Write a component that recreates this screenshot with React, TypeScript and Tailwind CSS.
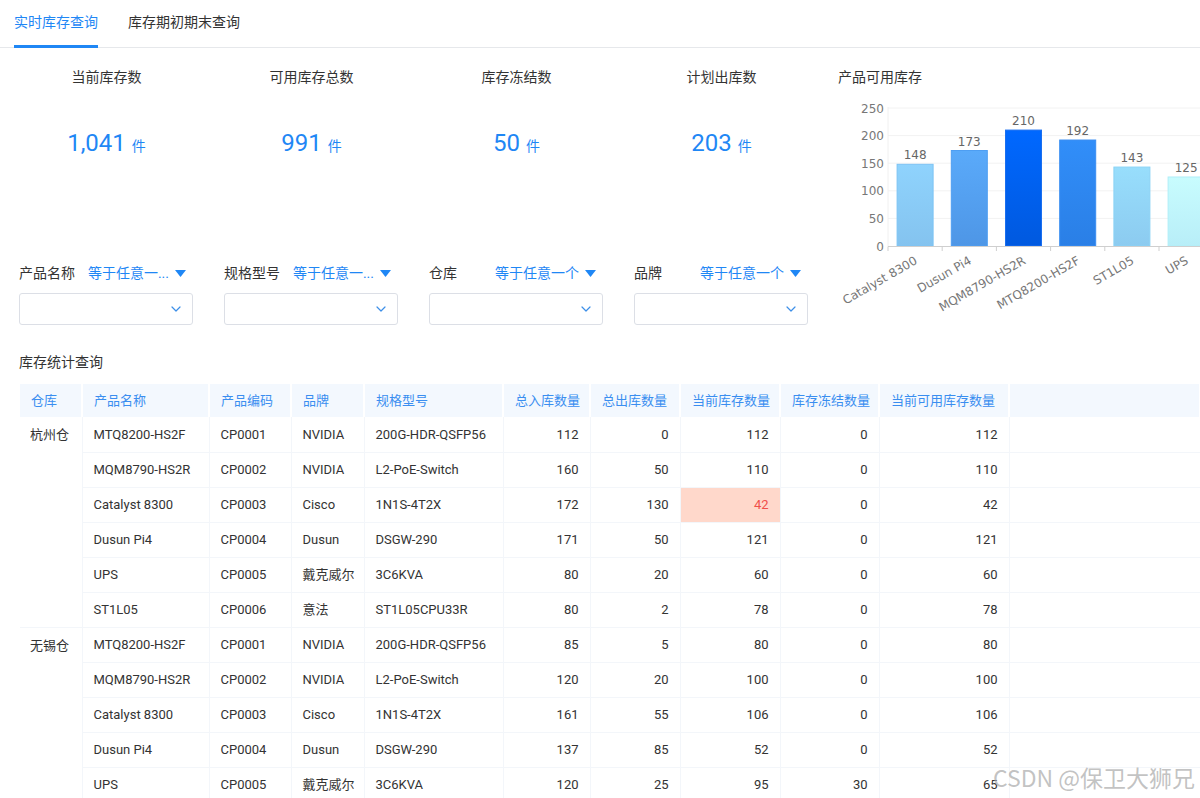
import { ChevronDown } from "lucide-react";

const font = { fontFamily: 'Roboto, "Noto Sans CJK SC", sans-serif' };

const stats = [
  { label: "当前库存数", value: "1,041" },
  { label: "可用库存总数", value: "991" },
  { label: "库存冻结数", value: "50" },
  { label: "计划出库数", value: "203" },
];

const filters = [
  { label: "产品名称", op: "等于任意一..." },
  { label: "规格型号", op: "等于任意一..." },
  { label: "仓库", op: "等于任意一个" },
  { label: "品牌", op: "等于任意一个" },
];

const bars = [
  { name: "Catalyst 8300", v: 148, top: "#8fd3fd", bottom: "#84c3ef", stroke: "#7cc3f4" },
  { name: "Dusun Pi4", v: 173, top: "#5aaafa", bottom: "#4e96e6", stroke: "#4e9ef2" },
  { name: "MQM8790-HS2R", v: 210, top: "#0068ff", bottom: "#0059df", stroke: "#1a6ff0" },
  { name: "MTQ8200-HS2F", v: 192, top: "#318ef9", bottom: "#2a7fe6", stroke: "#3a8ef2" },
  { name: "ST1L05", v: 143, top: "#98defc", bottom: "#8ccbf0", stroke: "#8ad3f6" },
  { name: "UPS", v: 125, top: "#c8fcfe", bottom: "#b8eef8", stroke: "#b0eef8" },
];

type Row = [string, string, string, string, number, number, number, number, number];

const hz: Row[] = [
  ["MTQ8200-HS2F", "CP0001", "NVIDIA", "200G-HDR-QSFP56", 112, 0, 112, 0, 112],
  ["MQM8790-HS2R", "CP0002", "NVIDIA", "L2-PoE-Switch", 160, 50, 110, 0, 110],
  ["Catalyst 8300", "CP0003", "Cisco", "1N1S-4T2X", 172, 130, 42, 0, 42],
  ["Dusun Pi4", "CP0004", "Dusun", "DSGW-290", 171, 50, 121, 0, 121],
  ["UPS", "CP0005", "戴克威尔", "3C6KVA", 80, 20, 60, 0, 60],
  ["ST1L05", "CP0006", "意法", "ST1L05CPU33R", 80, 2, 78, 0, 78],
];

const wx: Row[] = [
  ["MTQ8200-HS2F", "CP0001", "NVIDIA", "200G-HDR-QSFP56", 85, 5, 80, 0, 80],
  ["MQM8790-HS2R", "CP0002", "NVIDIA", "L2-PoE-Switch", 120, 20, 100, 0, 100],
  ["Catalyst 8300", "CP0003", "Cisco", "1N1S-4T2X", 161, 55, 106, 0, 106],
  ["Dusun Pi4", "CP0004", "Dusun", "DSGW-290", 137, 85, 52, 0, 52],
  ["UPS", "CP0005", "戴克威尔", "3C6KVA", 120, 25, 95, 30, 65],
];

const headers = ["仓库", "产品名称", "产品编码", "品牌", "规格型号", "总入库数量", "总出库数量", "当前库存数量", "库存冻结数量", "当前可用库存数量", ""];
const widths = [62, 127, 82, 73, 139, 87, 90, 100, 99, 130, 191];

function Chart() {
  const y = (v: number) => 151 - v * 0.552;
  const ticks = [0, 50, 100, 150, 200, 250];
  const cw = 54.2;
  return (
    <svg width="370" height="225" viewBox="0 0 370 225" style={{ fontFamily: '"DejaVu Sans", Verdana, sans-serif' }}>
      <defs>
        {bars.map((b, i) => (
          <linearGradient key={i} id={`g${i}`} x1="0" y1="0" x2="0" y2="1">
            <stop offset="0" stopColor={b.top} />
            <stop offset="1" stopColor={b.bottom} />
          </linearGradient>
        ))}
      </defs>
      {ticks.map((t) => (
        <g key={t}>
          {t > 0 && <line x1="58" x2="370" y1={y(t)} y2={y(t)} stroke="#f2f2f2" />}
          <text x="54" y={y(t) + 4.5} textAnchor="end" fontSize="12" fill="#777">
            {t}
          </text>
        </g>
      ))}
      <line x1="58" x2="58" y1="12" y2="151" stroke="#f0f0f0" />
      {bars.map((b, i) => {
        const cx = 58 + cw * (i + 0.5);
        return (
          <g key={b.name}>
            <rect x={cx - 18} y={y(b.v)} width="36" height={151 - y(b.v)} fill={`url(#g${i})`} stroke={b.stroke} strokeWidth="1" />
            <text x={cx} y={y(b.v) - 5} textAnchor="middle" fontSize="12" fill="#666">
              {b.v}
            </text>
            <text x={cx + 3} y="168" textAnchor="end" fontSize="12" fill="#777" transform={`rotate(-30 ${cx + 3} 168)`}>
              {b.name}
            </text>
          </g>
        );
      })}
      <line x1="58" x2="370" y1="151.5" y2="151.5" stroke="#cfcfcf" />
      {bars.map((_, i) => (
        <line key={i} x1={58 + cw * i} x2={58 + cw * i} y1="151.5" y2="156" stroke="#cfcfcf" />
      ))}
    </svg>
  );
}

function Rows({ wh, rows }: { wh: string; rows: Row[] }) {
  return (
    <>
      {rows.map((r, i) => (
        <tr key={i} className="h-[35px]">
          {i === 0 && (
            <td rowSpan={rows.length} className="align-top pl-[10px] pt-[8px] border-r border-b border-[#f3f6fa]">
              {wh}
            </td>
          )}
          {r.slice(0, 4).map((c, j) => (
            <td key={j} className="pl-[11px] border-r border-b border-[#f3f6fa] whitespace-nowrap">
              {c}
            </td>
          ))}
          {r.slice(4).map((c, j) => {
            const warn = wh === "杭州仓" && i === 2 && j === 2;
            return (
              <td
                key={j}
                className={
                  warn
                    ? "text-right pr-[11px] border-r border-b border-[#f3f6fa] bg-[#ffd8cb] text-[#f0504a]"
                    : "text-right pr-[11px] border-r border-b border-[#f3f6fa]"
                }
              >
                {c}
              </td>
            );
          })}
          <td className="border-b border-[#f3f6fa]"></td>
        </tr>
      ))}
    </>
  );
}

export default function App() {
  return (
    <div className="relative h-[798px] w-[1200px] overflow-hidden bg-white text-[#333]" style={font}>
      <div className="flex h-[48px] gap-[30px] border-b border-[#e6e8eb] pl-[14px] text-[14px]">
        <div className="relative flex items-start pt-[12px] text-[#1f87f5]">
          实时库存查询
          <div className="absolute bottom-[-1px] left-0 right-0 h-[3px] bg-[#1f87f5]"></div>
        </div>
        <div className="flex items-start pt-[12px] text-[#333]">库存期初期末查询</div>
      </div>

      <div className="flex">
        <div className="w-[830px]">
          <div className="flex pl-[4px] pt-[19px]">
            {stats.map((s) => (
              <div key={s.label} className="flex w-[205px] flex-col items-center">
                <div className="h-[20px] text-[14px] leading-[20px] text-[#333]">{s.label}</div>
                <div className="mt-[40px] flex h-[32px] items-baseline text-[#1f87f5]">
                  <span className="text-[24px] leading-[32px]">{s.value}</span>
                  <span className="ml-[6px] text-[14px]">件</span>
                </div>
              </div>
            ))}
          </div>
          <div className="mt-[104px] flex gap-[31px] pl-[19px]">
            {filters.map((f) => (
              <div key={f.label} className="w-[174px]">
                <div className="flex h-[20px] items-center justify-between pr-[7px] text-[14px] leading-[20px]">
                  <span className="text-[#333]">{f.label}</span>
                  <span className="flex items-center text-[#1f87f5]">
                    {f.op}
                    <svg width="11" height="7" viewBox="0 0 11 7" className="ml-[6px]">
                      <path d="M0 0 L11 0 L5.5 7 Z" fill="#1f87f5" />
                    </svg>
                  </span>
                </div>
                <div className="mt-[10px] flex h-[32px] items-center justify-end rounded-[3px] border border-[#dcdfe6] pr-[8px]">
                  <ChevronDown size={16} strokeWidth={1.8} className="text-[#3d8fe8]" />
                </div>
              </div>
            ))}
          </div>
        </div>
        <div className="flex-1">
          <div className="pl-[8px] pt-[19px] text-[14px] leading-[20px] text-[#333]">产品可用库存</div>
          <div className="mt-[8px]">
            <Chart />
          </div>
        </div>
      </div>

      <div className="mt-[27px] pl-[19px] text-[14px] leading-[20px] text-[#333]">库存统计查询</div>

      <div className="mt-[12px] pl-[20px]">
        <table className="table-fixed border-collapse text-[13px] text-[#333]" style={{ width: 1180 }}>
          <colgroup>
            {widths.map((w, i) => (
              <col key={i} style={{ width: w }} />
            ))}
          </colgroup>
          <thead>
            <tr className="h-[33px] bg-[#f3f8fe]">
              {headers.map((h, i) => (
                <th key={i} className="border-r-2 border-white pl-[11px] text-left font-normal text-[#3a8ef0] whitespace-nowrap">
                  {h}
                </th>
              ))}
            </tr>
          </thead>
          <tbody>
            <Rows wh="杭州仓" rows={hz} />
            <Rows wh="无锡仓" rows={wx} />
          </tbody>
        </table>
      </div>

      <div className="pointer-events-none absolute bottom-[7px] right-[5px] text-[23px] leading-[28px] text-[#a8a8a8]/70" style={{ fontFamily: '"Noto Sans CJK SC", sans-serif' }}>
        CSDN @保卫大狮兄
      </div>
    </div>
  );
}
